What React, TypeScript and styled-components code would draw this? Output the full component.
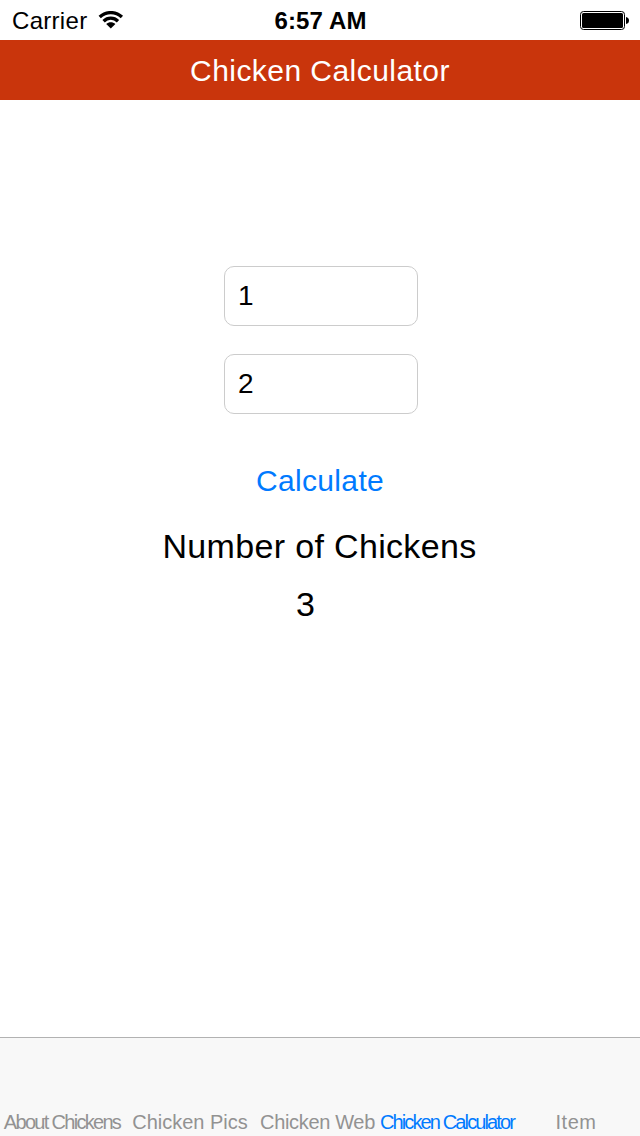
import React from "react";
import styled, { createGlobalStyle } from "styled-components";

const Global = createGlobalStyle`
  * { box-sizing: border-box; }
  body { margin: 0; background: #fff; font-family: "Liberation Sans", Arial, sans-serif; color: #000; }
`;
const Screen = styled.div`
  width: 640px; height: 1136px; display: flex; flex-direction: column; background: #fff; overflow: hidden;
`;
const StatusBar = styled.div`
  height: 40px; flex: none; display: grid; grid-template-columns: 1fr auto 1fr; align-items: center; padding: 1px 11px 0 12px;
`;
const StatusSide = styled.div<{ $end?: boolean }>`
  display: flex; align-items: center; gap: 11px; justify-content: ${p => (p.$end ? "flex-end" : "flex-start")};
`;
const Text = styled.span<{ $size: number; $spacing?: number; $bold?: boolean; $color?: string }>`
  font-size: ${p => p.$size}px; letter-spacing: ${p => p.$spacing ?? 0}px; line-height: 1.2;
  font-weight: ${p => (p.$bold ? 700 : 400)}; color: ${p => p.$color ?? "#000"}; white-space: nowrap;
`;
const StatusText = styled(Text)`
  padding-top: 2px;
`;
const NavBar = styled.header`
  height: 60px; flex: none; display: flex; align-items: center; justify-content: center; background: #c9350c; padding-top: 2px;
`;
const Content = styled.main`
  flex: 1; display: flex; flex-direction: column; align-items: center; padding-top: 166px;
`;
const Field = styled.input`
  width: 194px; height: 60px; margin: 0 0 28px 2px; padding: 0 13px; border: 1px solid #ccc; border-radius: 10px;
  font: 28px "Liberation Sans", Arial, sans-serif; letter-spacing: 0; color: #000; background: #fff; outline: none;
`;
const CalculateButton = styled.button`
  border: 0; background: none; padding: 0; height: 36px; margin-top: 21px; font-family: inherit;
`;
const ResultLabel = styled.div`
  height: 42px; margin: 26px 1px 0 0; display: flex; align-items: center;
`;
const Result = styled.output`
  height: 42px; margin: 16px 29px 0 0; display: flex; align-items: center;
`;
const TabBar = styled.nav`
  height: 99px; flex: none; display: grid; grid-template-columns: repeat(5, 128px); background: #f8f8f8; border-top: 1px solid #b2b2b2;
`;
const Tab = styled.div<{ $inset: number }>`
  display: flex; align-items: flex-end; justify-content: center; padding: 0 ${p => p.$inset}px 2px 0; min-width: 0;
`;
const tabs = [
  { label: "About Chickens", spacing: -1.7, inset: 4 },
  { label: "Chicken Pics", spacing: 0, inset: 4 },
  { label: "Chicken Web", spacing: -0.33, inset: 5 },
  { label: "Chicken Calculator", spacing: -1.87, inset: 2, active: true },
  { label: "Item", spacing: 0.5, inset: 0 },
];
export default function App() {
  return (
    <Screen>
      <Global />
      <StatusBar>
        <StatusSide>
          <StatusText $size={24} $spacing={0.3}>Carrier</StatusText>
          <svg width="26" height="19" viewBox="0 0 26 19" fill="none" stroke="#000" strokeWidth="3.3">
            <path d="M1.7 6C8 .1 17.6 .1 23.9 6" /><path d="M5.6 10.2C9.7 6.2 15.9 6.2 20 10.2" />
            <path d="M8.2 13C10.8 10.8 14.8 10.8 17.4 13L12.8 17.5Z" fill="#000" stroke="none" />
          </svg>
        </StatusSide>
        <StatusText $size={24} $bold $spacing={0.15}>6:57 AM</StatusText>
        <StatusSide $end>
          <svg width="49" height="19" viewBox="0 0 49 19">
            <rect x=".5" y=".5" width="44" height="18" rx="3" fill="none" stroke="#000" />
            <rect x="2" y="2" width="41" height="15" rx="1.5" /><path d="M46 6Q49 6.5 49 9.5T46 13Z" />
          </svg>
        </StatusSide>
      </StatusBar>
      <NavBar><Text $size={30} $spacing={0.45} $color="#fff">Chicken Calculator</Text></NavBar>
      <Content>
        <Field defaultValue="1" aria-label="First number" />
        <Field defaultValue="2" aria-label="Second number" />
        <CalculateButton><Text $size={30} $spacing={0.35} $color="#007aff">Calculate</Text></CalculateButton>
        <ResultLabel><Text $size={34} $spacing={0.34}>Number of Chickens</Text></ResultLabel>
        <Result><Text $size={34}>3</Text></Result>
      </Content>
      <TabBar>
        {tabs.map(t => (
          <Tab key={t.label} $inset={t.inset}><Text $size={20} $spacing={t.spacing} $color={t.active ? "#007aff" : "#929292"}>{t.label}</Text></Tab>
        ))}
      </TabBar>
    </Screen>
  );
}
